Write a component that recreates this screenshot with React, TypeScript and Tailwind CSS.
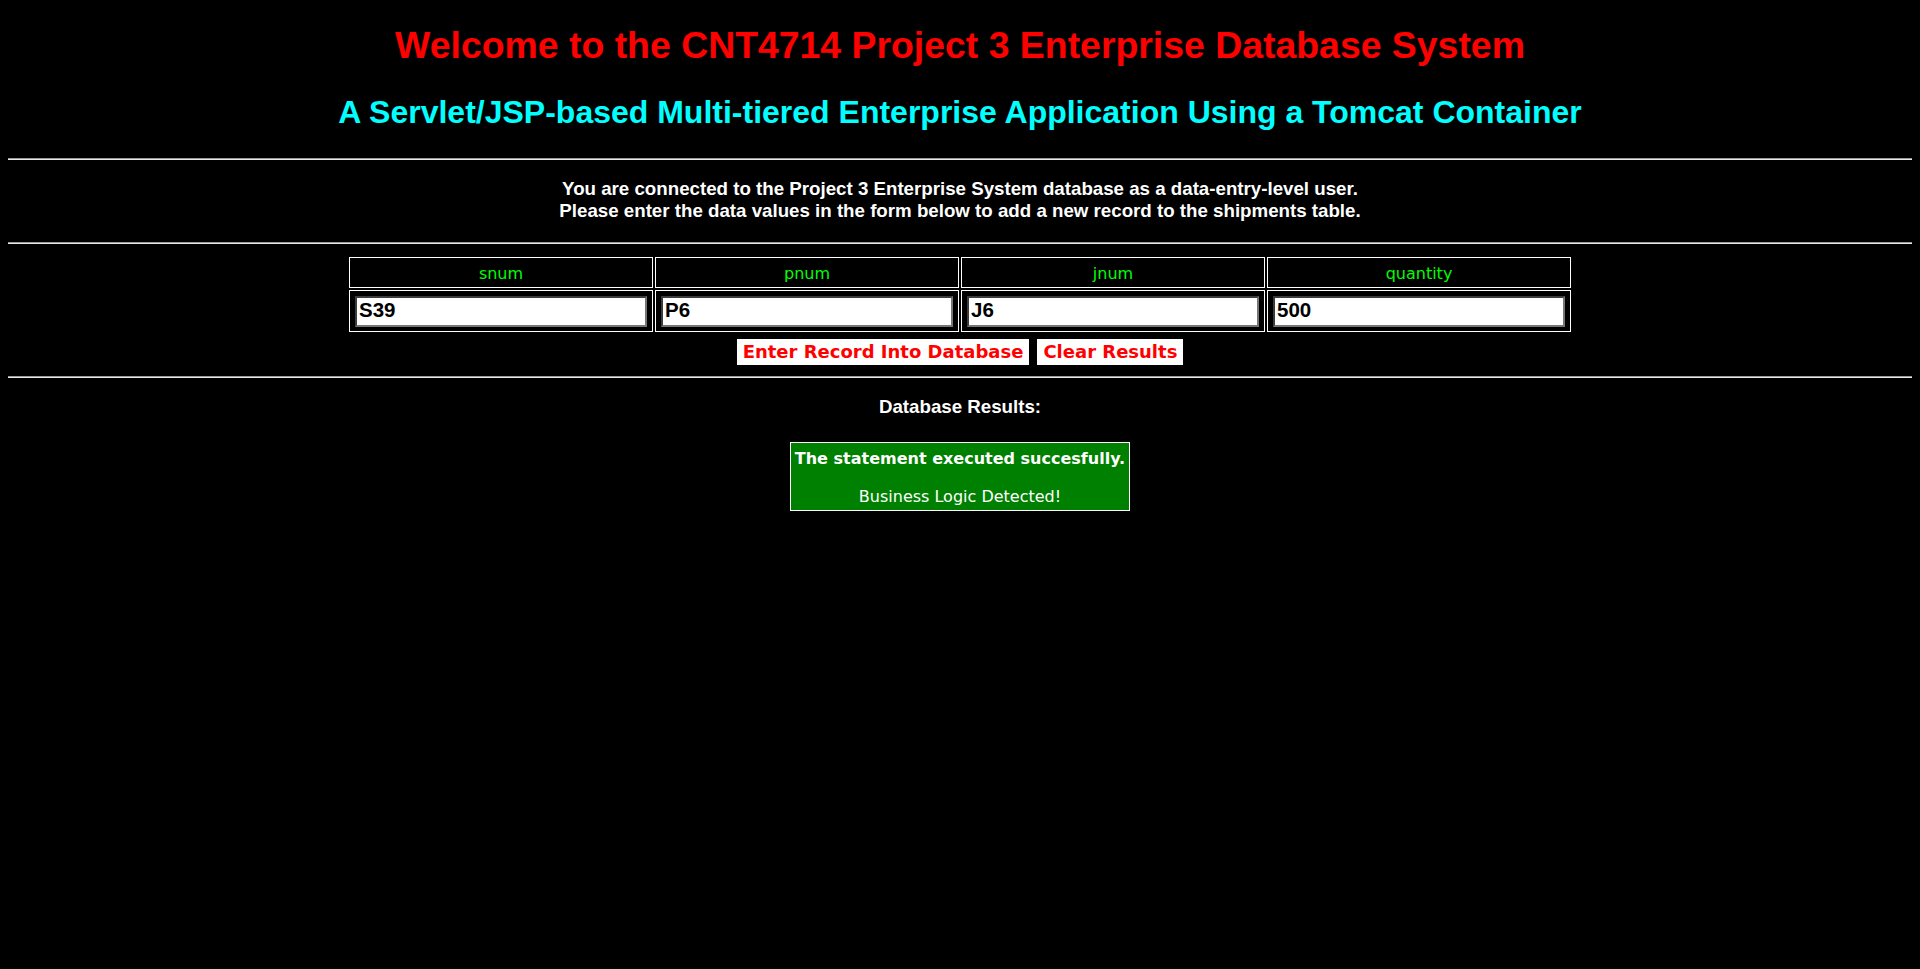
import React from "react";

const arial = { fontFamily: '"Liberation Sans", Arial, sans-serif' };
const verdana = { fontFamily: '"DejaVu Sans", Verdana, sans-serif' };

function Rule() {
  return <div className="h-[2px] w-full border-t border-b border-t-[#9a9a9a] border-b-[#e8e8e8]" />;
}

export default function App() {
  const cols = [
    { name: "snum", value: "S39" },
    { name: "pnum", value: "P6" },
    { name: "jnum", value: "J6" },
    { name: "quantity", value: "500" },
  ];
  return (
    <div className="min-h-screen bg-black px-[8px] pt-[24px] pb-10 text-white" style={arial}>
      <h1 className="text-center text-[37.4px] leading-[43px] font-bold text-[#ff0000]">
        Welcome to the CNT4714 Project 3 Enterprise Database System
      </h1>
      <h2 className="mt-[27px] text-center text-[32px] leading-[37px] font-bold text-[#00ffff]">
        A Servlet/JSP-based Multi-tiered Enterprise Application Using a Tomcat Container
      </h2>
      <div className="mt-[27px]">
        <Rule />
      </div>
      <div className="mt-[18px] text-center text-[18.72px] leading-[22px] font-bold text-white">
        <div>You are connected to the Project 3 Enterprise System database as a data-entry-level user.</div>
        <div>Please enter the data values in the form below to add a new record to the shipments table.</div>
      </div>
      <div className="mt-[20px]">
        <Rule />
      </div>
      <div className="mx-auto mt-[13px] flex w-[1222px] flex-col gap-[2px]">
        <div className="grid grid-cols-4 gap-[2px]">
          {cols.map((c) => (
            <div
              key={c.name}
              className="border border-white pt-[6px] pb-[4px] text-center text-[16px] leading-[19px] text-[#00ff00]"
              style={verdana}
            >
              {c.name}
            </div>
          ))}
        </div>
        <div className="grid grid-cols-4 gap-[2px]">
          {cols.map((c) => (
            <div key={c.name} className="border border-white px-[5px] pt-[5px] pb-[4px]">
              <input
                readOnly
                value={c.value}
                className="h-[31px] w-full border-2 border-t-[#3c3c3c] border-l-[#3c3c3c] border-b-[#767676] border-r-[#767676] bg-white px-[2px] pt-0 pb-[4px] text-[20.5px] leading-[23px] font-bold text-black outline-none"
                style={arial}
              />
            </div>
          ))}
        </div>
      </div>
      <div className="mt-[7px] flex justify-center gap-[8px]">
        <button
          className="h-[26px] bg-white px-[6px] text-[18px] leading-[26px] font-bold text-[#ff0000]"
          style={verdana}
        >
          Enter Record Into Database
        </button>
        <button
          className="h-[26px] bg-white px-[6px] text-[18px] leading-[26px] font-bold text-[#ff0000]"
          style={verdana}
        >
          Clear Results
        </button>
      </div>
      <div className="mt-[11px]">
        <Rule />
      </div>
      <div className="mt-[18px] text-center text-[18.72px] leading-[22px] font-bold text-white">
        Database Results:
      </div>
      <div className="mt-[24px] flex justify-center">
        <div
          className="w-[340px] border border-white bg-[#008000] pt-[6px] pb-[4px] text-center text-[16px] leading-[19px] text-white"
          style={verdana}
        >
          <div className="font-bold">The statement executed succesfully.</div>
          <div>&nbsp;</div>
          <div>Business Logic Detected!</div>
        </div>
      </div>
    </div>
  );
}
